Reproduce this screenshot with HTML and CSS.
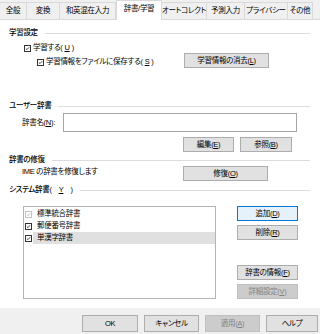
FILE: index.html
```html
<!DOCTYPE html>
<html lang="ja">
<head>
  <meta charset="UTF-8" />
  <title>Microsoft IME の詳細設定</title>
  <link rel="stylesheet" href="styles.css">
</head>
<body>
<div class="dialog">

  <!-- タブ -->
  <div class="tabs">
    <div class="tab w1">全般</div>
    <div class="tab w2">変換</div>
    <div class="tab w3">和英混在入力</div>
    <div class="tab w4 active">辞書/学習</div>
    <div class="tab w5">オートコレクト</div>
    <div class="tab w6">予測入力</div>
    <div class="tab w7">プライバシー</div>
    <div class="tab w8">その他</div>
  </div>

  <div class="panel">
    <!-- 学習設定 -->
    <div class="group-title">学習設定</div>
    <label class="check learn-row">
      <span class="box"><svg viewBox="0 0 7 7"><path d="M1.2 3.6 L2.8 5.1 L5.8 1.6"/></svg></span>学習する(<u>U</u>)
    </label>
    <div class="save-row">
      <label class="check save-label">
        <span class="box"><svg viewBox="0 0 7 7"><path d="M1.2 3.6 L2.8 5.1 L5.8 1.6"/></svg></span>学習情報をファイルに保存する(<u>S</u>)
      </label>
      <button class="btn w85">学習情報の消去(<u>L</u>)</button>
    </div>

    <!-- ユーザー辞書 -->
    <div class="group-title g2">ユーザー辞書</div>
    <div class="name-row">
      <span class="name-label">辞書名(<u>N</u>):</span>
      <input class="name-input" type="text">
    </div>
    <div class="edit-row">
      <button class="btn w51">編集(<u>E</u>)</button>
      <button class="btn w52">参照(<u>B</u>)</button>
    </div>

    <!-- 辞書の修復 -->
    <div class="group-title g3">辞書の修復</div>
    <div class="repair-row">
      <span class="repair-text">IME の辞書を修復します</span>
      <button class="btn w85">修復(<u>O</u>)</button>
    </div>

    <!-- システム辞書 -->
    <div class="group-title g4">システム辞書(<u>Y</u>)</div>
    <div class="dict-row">
      <div class="dict-list">
        <div class="item">
          <span class="box dim"><svg viewBox="0 0 7 7"><path d="M1.2 3.6 L2.8 5.1 L5.8 1.6"/></svg></span>
          <span class="item-text">標準統合辞書</span>
        </div>
        <div class="item">
          <span class="box"><svg viewBox="0 0 7 7"><path d="M1.2 3.6 L2.8 5.1 L5.8 1.6"/></svg></span>
          <span class="item-text">郵便番号辞書</span>
        </div>
        <div class="item">
          <span class="box"><svg viewBox="0 0 7 7"><path d="M1.2 3.6 L2.8 5.1 L5.8 1.6"/></svg></span>
          <span class="item-text selected">単漢字辞書</span>
        </div>
      </div>
      <div class="dict-buttons">
        <div class="btn-stack">
          <button class="btn focus">追加(<u>D</u>)</button>
          <button class="btn">削除(<u>R</u>)</button>
        </div>
        <div class="btn-stack">
          <button class="btn">辞書の情報(<u>F</u>)</button>
          <button class="btn" disabled>詳細設定(<u>V</u>)</button>
        </div>
      </div>
    </div>
  </div>

  <!-- 下のボタン -->
  <div class="footer">
    <button class="btn fbtn w56">OK</button>
    <button class="btn fbtn w55">キャンセル</button>
    <button class="btn fbtn w55" disabled>適用(<u>A</u>)</button>
    <button class="btn fbtn w52">ヘルプ</button>
  </div>
</div>
</body>
</html>
```

FILE: styles.css
```css
body {
  margin: 0;
  background: #f0f0f0;
  font-family: "Liberation Sans Narrow", "Liberation Sans", "Noto Sans CJK JP", sans-serif;
  font-size: 7.5px;
  font-feature-settings: "palt";
  text-autospace: no-autospace;
  letter-spacing: -0.3px;
  color: #000;
}

u {
  text-decoration: underline;
}

.dialog {
  width: 320px;
  height: 334px;
  overflow: hidden;
}

/* Tabs */
.tabs {
  display: flex;
  height: 19px;
}
.tab {
  box-sizing: border-box;
  margin-top: 2px;
  height: 17px;
  border-top: 1px solid #d9d9d9;
  border-right: 1px solid #d9d9d9;
  background: #f0f0f0;
  display: flex;
  align-items: center;
  justify-content: center;
  line-height: 10px;
  white-space: nowrap;
}
.tab.active {
  margin-top: 0;
  height: 20px;
  background: #fff;
  border-left: 1px solid #d9d9d9;
  padding-bottom: 3px;
  position: relative;
  z-index: 1;
}
.w1 { width: 27px; }
.w2 { width: 33px; }
.w3 { width: 56px; }
.w4 { width: 46px; }
.w5 { width: 45px; }
.w6 { width: 38px; }
.w7 { width: 43px; }
.w8 { width: 25px; }

/* Panel */
.panel {
  box-sizing: border-box;
  height: 289px;
  background: #fff;
  border-top: 1px solid #d9d9d9;
  overflow: hidden;
}

.group-title {
  display: flex;
  align-items: center;
  gap: 7px;
  height: 10px;
  line-height: 10px;
  margin: 8px 10px 0 9px;
  font-weight: 500;
  white-space: nowrap;
}
.group-title::after {
  content: "";
  flex: 1;
  height: 1px;
  background: #dcdcdc;
}
.g2 { margin-top: 33px; }
.g3 { margin-top: 3px; }
.g4 { margin-top: 4px; }

.check {
  display: flex;
  align-items: center;
  gap: 2px;
  height: 10px;
  line-height: 10px;
  white-space: nowrap;
}
.box {
  box-sizing: border-box;
  width: 7px;
  height: 7px;
  border: 1px solid #333;
  background: #fff;
  flex: none;
  display: block;
}
.box svg {
  display: block;
  width: 5px;
  height: 5px;
  fill: none;
  stroke: #222;
  stroke-width: 1.1;
}
.box.dim {
  border-color: #c4c4c4;
}
.box.dim svg {
  stroke: #b4b4b4;
}

.learn-row {
  margin: 5px 0 0 24px;
}

.save-row {
  display: flex;
  height: 15px;
  margin-left: 37px;
}
.save-label {
  width: 147px;
  margin-top: 4px;
}

/* Buttons */
.btn {
  box-sizing: border-box;
  height: 15px;
  padding: 0;
  border: 1px solid #adadad;
  background: #e1e1e1;
  font-family: inherit;
  font-size: inherit;
  font-feature-settings: "palt";
  letter-spacing: inherit;
  line-height: 12px;
  color: #000;
  white-space: nowrap;
  text-align: center;
}
.btn:disabled {
  background: #cccccc;
  border-color: #bfbfbf;
  color: #838383;
}
.btn.focus {
  border-color: #0078d7;
  background: #e5f1fb;
}
.w85 { width: 85px; }
.w51 { width: 51px; }
.w52 { width: 52px; }
.w55 { width: 55px; }
.w56 { width: 56px; }

/* User dictionary */
.name-row {
  display: flex;
  align-items: center;
  height: 19px;
  margin: 2px 0 0 22px;
}
.name-label {
  width: 41px;
  line-height: 10px;
}
.name-input {
  box-sizing: border-box;
  width: 234px;
  height: 19px;
  margin: 0;
  border: 1px solid #a6a6a6;
  background: #fff;
}

.edit-row {
  display: flex;
  gap: 6px;
  margin: 5px 0 0 183px;
}

.repair-row {
  display: flex;
  height: 15px;
  margin: 1px 0 0 22px;
}
.repair-text {
  width: 161px;
  padding-top: 1px;
  line-height: 10px;
}

/* System dictionary */
.dict-row {
  display: flex;
  margin: 11px 0 0 23px;
}
.dict-list {
  box-sizing: border-box;
  width: 193px;
  height: 93px;
  border: 1px solid #b4b4b4;
  padding-top: 1px;
}
.item {
  display: flex;
  align-items: center;
  height: 12px;
  padding-left: 1px;
}
.item-text {
  flex: 1;
  height: 12px;
  line-height: 12px;
  margin-left: 1px;
  padding-left: 4px;
}
.item-text.selected {
  background: #e0e0e0;
}

.dict-buttons {
  display: flex;
  flex-direction: column;
  justify-content: space-between;
  width: 61px;
  height: 93px;
  margin-left: 21px;
}
.btn-stack {
  display: flex;
  flex-direction: column;
  gap: 4px;
}
.btn-stack .btn {
  width: 61px;
}

/* Footer */
.footer {
  display: flex;
  gap: 6px;
  height: 26px;
  box-sizing: border-box;
  padding: 7px 0 0 82px;
}
.fbtn {
  height: 17px;
  line-height: 14px;
}
```
